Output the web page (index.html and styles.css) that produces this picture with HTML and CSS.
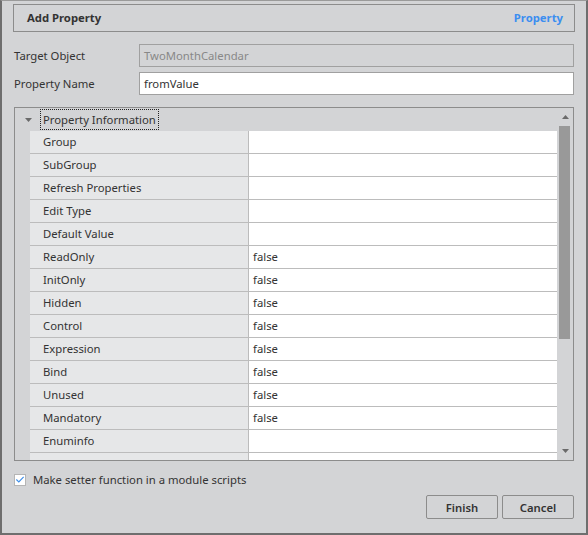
FILE: index.html
```html
<!DOCTYPE html>
<html>
<head>
<meta charset="utf-8">
<link rel="stylesheet" href="styles.css">
</head>
<body>
<div class="window">
  <div class="header">
    <span class="title">Add Property</span>
    <span class="tag">Property</span>
  </div>
  <div class="form">
    <div class="frow">
      <label class="flabel">Target Object</label>
      <div class="input disabled">TwoMonthCalendar</div>
    </div>
    <div class="frow">
      <label class="flabel">Property Name</label>
      <div class="input">fromValue</div>
    </div>
  </div>
  <div class="pgrid">
    <div class="rows">
      <div class="cat">
        <span class="caret"><svg width="7" height="4" viewBox="0 0 7 4"><path d="M0 0H7L3.5 4Z" fill="#6a6a6a"/></svg></span>
        <span class="catname">Property Information</span>
      </div>
      <div class="prow"><span class="pname">Group</span><span class="pval"></span></div>
      <div class="prow"><span class="pname">SubGroup</span><span class="pval"></span></div>
      <div class="prow"><span class="pname">Refresh Properties</span><span class="pval"></span></div>
      <div class="prow"><span class="pname">Edit Type</span><span class="pval"></span></div>
      <div class="prow"><span class="pname">Default Value</span><span class="pval"></span></div>
      <div class="prow"><span class="pname">ReadOnly</span><span class="pval">false</span></div>
      <div class="prow"><span class="pname">InitOnly</span><span class="pval">false</span></div>
      <div class="prow"><span class="pname">Hidden</span><span class="pval">false</span></div>
      <div class="prow"><span class="pname">Control</span><span class="pval">false</span></div>
      <div class="prow"><span class="pname">Expression</span><span class="pval">false</span></div>
      <div class="prow"><span class="pname">Bind</span><span class="pval">false</span></div>
      <div class="prow"><span class="pname">Unused</span><span class="pval">false</span></div>
      <div class="prow"><span class="pname">Mandatory</span><span class="pval">false</span></div>
      <div class="prow"><span class="pname">Enuminfo</span><span class="pval"></span></div>
      <div class="prow"><span class="pname">Enuminfo2</span><span class="pval"></span></div>
    </div>
    <div class="scrollbar">
      <span class="arrow"><svg width="7" height="4" viewBox="0 0 7 4"><path d="M3.5 0L7 4H0Z" fill="#6a6a6a"/></svg></span>
      <div class="track"><div class="thumb"></div></div>
      <span class="arrow"><svg width="7" height="4" viewBox="0 0 7 4"><path d="M0 0H7L3.5 4Z" fill="#6a6a6a"/></svg></span>
    </div>
  </div>
  <div class="check">
    <span class="box"><svg width="11" height="11" viewBox="0 0 11 11"><path d="M1.5 5.5L4.2 8.2L9.5 2.5" fill="none" stroke="#3d8ee8" stroke-width="1.2"/></svg></span>
    <span class="clabel">Make setter function in a module scripts</span>
  </div>
  <div class="buttons">
    <button class="btn">Finish</button>
    <button class="btn">Cancel</button>
  </div>
</div>
</body>
</html>
```
FILE: styles.css
```css
* { box-sizing: border-box; }
html, body { margin: 0; padding: 0; }
body {
  font-family: "Noto Sans", "Open Sans", sans-serif;
  font-size: 11.3px;
  color: #333;
  background: #d3d4d6;
}
.window {
  width: 588px;
  height: 535px;
  background: #d3d4d6;
  border: 2px solid #6e6e6e;
  border-top: 1px solid #9a9a9a;
  padding: 3px 12px 0 12px;
  display: flex;
  flex-direction: column;
}
.header {
  margin: 0 -1px;
  height: 28px;
  border: 1px solid #8c8c8c;
  display: flex;
  align-items: center;
  justify-content: space-between;
  padding: 0 11px 1px 13px;
}
.title { font-weight: bold; color: #333; }
.tag { font-weight: bold; color: #3b8ef0; }
.form {
  margin-top: 12px;
  display: flex;
  flex-direction: column;
  gap: 5px;
}
.frow { display: flex; align-items: center; }
.flabel { width: 125px; color: #333; }
.input {
  flex: 1;
  height: 23px;
  border: 1px solid #a0a0a0;
  background: #fff;
  padding: 0 4px;
  line-height: 21px;
  color: #333;
}
.input.disabled { background: #d3d4d6; color: #888; }
.pgrid {
  margin-top: 12px;
  height: 354px;
  border: 1px solid #8c8c8c;
  display: flex;
  overflow: hidden;
}
.rows { width: 542px; overflow: hidden; }
.cat {
  height: 23px;
  display: flex;
  align-items: center;
  background: #d3d4d6;
}
.caret { width: 25px; display: flex; justify-content: center; padding-left: 2px; }
.catname {
  border: 1px dotted #222;
  padding: 0 2px 0 2px;
  height: 21px;
  line-height: 19px;
  color: #333;
}
.prow {
  height: 23px;
  margin-left: 15px;
  display: flex;
  border-bottom: 1px solid #bcbcbc;
}
.pname {
  width: 219px;
  background: #e6e7e8;
  border-right: 1px solid #bcbcbc;
  padding-left: 13px;
  line-height: 22px;
}
.pval {
  flex: 1;
  background: #fff;
  padding-left: 4px;
  line-height: 22px;
}
.scrollbar {
  width: 16px;
  background: #d3d4d6;
  display: flex;
  flex-direction: column;
  align-items: center;
}
.arrow { height: 18px; display: flex; align-items: center; justify-content: center; }
.track { flex: 1; width: 100%; padding: 0 3px 0 2px; }
.thumb { height: 213px; background: #999; }
.check {
  margin-top: 10px;
  height: 17px;
  display: flex;
  align-items: center;
  gap: 7px;
}
.box {
  width: 12px; height: 12px;
  background: #fff;
  border: 1px solid #b5b5b5;
  display: flex; align-items: center; justify-content: center;
}
.clabel { color: #333; }
.buttons {
  margin-top: 7px;
  display: flex;
  justify-content: flex-end;
  gap: 4px;
}
.btn {
  width: 72px;
  height: 24px;
  border: 1px solid #8c8c8c;
  border-radius: 2px;
  background: #d3d4d6;
  font-family: "Noto Sans", "Open Sans", sans-serif;
  font-size: 11.3px;
  font-weight: 600;
  color: #333;
}
```
